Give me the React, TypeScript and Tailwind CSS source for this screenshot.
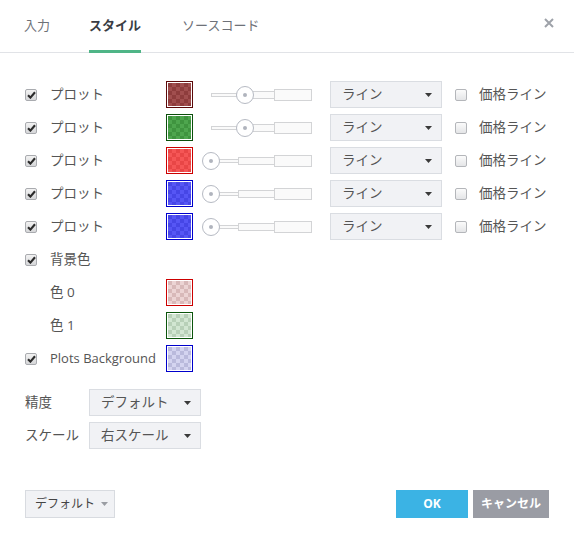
import React from 'react';

const swatches: Record<string, string> = {
  red: 'border-[#5c0a0a] [background:repeating-conic-gradient(#a14f4f_0_25%,#8e3d3d_0_50%)_0_0/8px_8px]',
  green: 'border-[#0b4f0b] [background:repeating-conic-gradient(#4ea64e_0_25%,#3f943f_0_50%)_0_0/8px_8px]',
  bright: 'border-[#cc0000] [background:repeating-conic-gradient(#f55656_0_25%,#e84646_0_50%)_0_0/8px_8px]',
  blue: 'border-[#0000cc] [background:repeating-conic-gradient(#5656f5_0_25%,#4646e6_0_50%)_0_0/8px_8px]',
  pink: 'border-[#cc0000] [background:repeating-conic-gradient(#ecd4d4_0_25%,#d8b9b9_0_50%)_0_0/8px_8px]',
  mint: 'border-[#0b550b] [background:repeating-conic-gradient(#d2e6d2_0_25%,#b8d0b8_0_50%)_0_0/8px_8px]',
  lav: 'border-[#0000cc] [background:repeating-conic-gradient(#d4d4f0_0_25%,#babadc_0_50%)_0_0/8px_8px]',
};

function ColorBox({ kind }: { kind: string }) {
  const cls = swatches[kind];
  const border = cls.split(' ')[0];
  const fill = cls.split(' ').slice(1).join(' ');
  return (
    <div className={`w-[27px] h-[27px] border ${border} bg-white p-[1px] shrink-0`}>
      <div className={`w-full h-full ${fill}`} />
    </div>
  );
}

function Check({ checked }: { checked: boolean }) {
  if (!checked) {
    return (
      <div className="w-[12px] h-[12px] rounded-[2px] border border-[#b4b6ba] bg-gradient-to-b from-[#fbfbfb] to-[#e4e5e7] shrink-0" />
    );
  }
  return (
    <div className="w-[12px] h-[12px] rounded-[2px] border border-[#a9abaf] bg-gradient-to-b from-[#f2f2f2] to-[#d6d7d9] flex items-center justify-center shrink-0">
      <svg width="9" height="8" viewBox="0 0 9 8">
        <path d="M1 4.2 L3.4 6.6 L8 1.2" fill="none" stroke="#2b2b2b" strokeWidth="2.1" />
      </svg>
    </div>
  );
}

function Slider({ at }: { at: number }) {
  return (
    <div className="relative ml-[9px] w-[110px] h-[20px] pl-[9px] flex items-center shrink-0">
      <div className="w-[28px] h-[4px] border border-[#d3d4d6] bg-[#fafafa]" />
      <div className="w-[37px] h-[8px] -ml-px border border-[#d3d4d6] bg-[#fafafa]" />
      <div className="w-[38px] h-[12px] -ml-px border border-[#d3d4d6] bg-[#fafafa]" />
      <div
        className={`absolute top-[1px] w-[18px] h-[18px] rounded-full border border-[#b6bac3] bg-white flex items-center justify-center ${at ? 'left-[34px]' : 'left-0'}`}
      >
        <div className="w-[4px] h-[4px] rounded-full bg-[#b0b4bd]" />
      </div>
    </div>
  );
}

function Caret({ color = '#3a3a3a' }: { color?: string }) {
  return (
    <svg width="7" height="4" viewBox="0 0 7 4">
      <path d="M0 0 H7 L3.5 4 Z" fill={color} />
    </svg>
  );
}

function Select({ label, w }: { label: string; w: string }) {
  return (
    <div className={`${w} h-[27px] shrink-0 border border-[#dadde2] bg-[#f1f2f5] flex items-center justify-between pl-[11px] pr-[9px] text-[#555]`}>
      <span>{label}</span>
      <Caret />
    </div>
  );
}

const plots = [
  { color: 'red', at: 1 },
  { color: 'green', at: 1 },
  { color: 'bright', at: 0 },
  { color: 'blue', at: 0 },
  { color: 'blue', at: 0 },
];

export default function App() {
  return (
    <div className="w-[574px] h-[541px] bg-white flex flex-col text-[13.5px] text-[#555] font-['Open_Sans','Noto_Sans_CJK_JP',sans-serif]">
      {/* tabs */}
      <div className="h-[53px] border-b border-[#e1e3e7] flex items-stretch pl-[24px] pr-[20px] shrink-0">
        <div className="flex items-center text-[13px] text-[#6e7178]">入力</div>
        <div className="ml-[39px] flex flex-col justify-end">
          <div className="flex-1 flex items-center text-[13px] font-bold text-[#3a3d44] pt-[2px]">スタイル</div>
          <div className="h-[3px] bg-[#4fb587] -mb-px" />
        </div>
        <div className="ml-[41px] flex items-center text-[13px] text-[#6e7178]">ソースコード</div>
        <div className="ml-auto flex items-center pb-[7px]">
          <svg width="10" height="10" viewBox="0 0 10 10">
            <path d="M1 1 L9 9 M9 1 L1 9" stroke="#9ea2a9" strokeWidth="2" />
          </svg>
        </div>
      </div>

      {/* rows */}
      <div className="flex flex-col gap-[6px] pt-[28px] pl-[25px]">
        {plots.map((p, i) => (
          <div key={i} className="h-[27px] flex items-center">
            <Check checked />
            <span className="ml-[13px] w-[116px]">プロット</span>
            <ColorBox kind={p.color} />
            <Slider at={p.at} />
            <div className="ml-[18px]">
              <Select label="ライン" w="w-[112px]" />
            </div>
            <div className="ml-[13px]">
              <Check checked={false} />
            </div>
            <span className="ml-[12px]">価格ライン</span>
          </div>
        ))}
        <div className="h-[27px] flex items-center">
          <Check checked />
          <span className="ml-[13px]">背景色</span>
        </div>
        <div className="h-[27px] flex items-center">
          <span className="ml-[25px] w-[116px]">色 0</span>
          <ColorBox kind="pink" />
        </div>
        <div className="h-[27px] flex items-center">
          <span className="ml-[25px] w-[116px]">色 1</span>
          <ColorBox kind="mint" />
        </div>
        <div className="h-[27px] flex items-center">
          <Check checked />
          <span className="ml-[13px] w-[116px] text-[13px]">Plots Background</span>
          <ColorBox kind="lav" />
        </div>
      </div>

      {/* precision / scale */}
      <div className="flex flex-col gap-[6px] pt-[17px] pl-[25px]">
        <div className="flex items-center">
          <span className="w-[64px]">精度</span>
          <Select label="デフォルト" w="w-[112px]" />
        </div>
        <div className="flex items-center">
          <span className="w-[64px]">スケール</span>
          <Select label="右スケール" w="w-[112px]" />
        </div>
      </div>

      {/* footer */}
      <div className="mt-auto mb-[23px] px-[25px] flex items-center">
        <div className="w-[90px] h-[28px] border border-[#d8dbe0] bg-[#f1f2f5] flex items-center pl-[9px] gap-[6px] text-[12px] text-[#444]">
          <span>デフォルト</span>
          <Caret color="#9a9da3" />
        </div>
        <div className="ml-auto flex gap-[5px]">
          <div className="w-[72px] h-[28px] bg-[#3bb3e4] text-white font-bold text-[12px] flex items-center justify-center">OK</div>
          <div className="w-[76px] h-[28px] bg-[#9a9ca4] text-white font-bold text-[12px] flex items-center justify-center">キャンセル</div>
        </div>
      </div>
    </div>
  );
}
